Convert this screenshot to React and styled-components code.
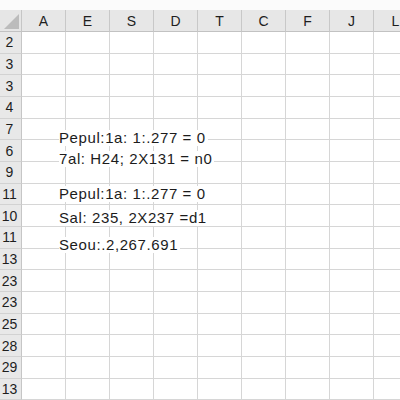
import React from "react";
import styled, { createGlobalStyle } from "styled-components";

const Global = createGlobalStyle`
  html, body { margin: 0; padding: 0; background: #ffffff; }
  body { font-family: "Liberation Sans", Arial, sans-serif; }
`;

const ROW_H = 21.67;
const COLS = ["A", "E", "S", "D", "T", "C", "F", "J", "L"];
const ROWS = [
  { n: "2" }, { n: "3" }, { n: "3" }, { n: "4" },
  { n: "7", text: "Pepul:1a: 1:.277 = 0", shift: 11 },
  { n: "6", text: "7al: H24; 2X131 = n0", shift: 11 },
  { n: "9" },
  { n: "11", text: "Pepul:1a: 1:.277 = 0", shift: 2 },
  { n: "10", text: "Sal: 235, 2X237 =d1", shift: 5 },
  { n: "11", text: "Seou:.2,267.691", shift: 10 },
  { n: "13" }, { n: "23" }, { n: "23" }, { n: "25" }, { n: "28" }, { n: "29" }, { n: "13" },
];

const Page = styled.div`
  width: 400px;
  height: 400px;
  overflow: hidden;
  padding-top: 10px;
  box-sizing: border-box;
  background: #fbfbfb;
`;

const Sheet = styled.div`
  display: grid;
  grid-template-columns: 22px repeat(9, 44px);
  grid-template-rows: 22px;
  grid-auto-rows: ${ROW_H}px;
  background: #ffffff;
`;

const Corner = styled.div`
  position: relative;
  background: #e6e6e6;
  border-right: 1px solid #c6c6c6;
  border-bottom: 1px solid #c2c2c2;
  box-sizing: border-box;
  &::after {
    content: "";
    position: absolute;
    right: 2px;
    bottom: 2px;
    width: 0;
    height: 0;
    border-left: 15px solid transparent;
    border-bottom: 15px solid #bcbcbc;
  }
`;

const ColHeader = styled.div`
  display: flex;
  align-items: center;
  justify-content: center;
  background: #e7e7e7;
  border-right: 1px solid #c8c8c8;
  border-bottom: 1px solid #c2c2c2;
  box-sizing: border-box;
  font-size: 14px;
  color: #1e1e1e;
  padding-top: 1px;
`;

const RowHeader = styled.div`
  display: flex;
  align-items: center;
  justify-content: center;
  background: #e8e8e8;
  border-right: 1px solid #c6c6c6;
  border-bottom: 1px solid #d2d2d2;
  box-sizing: border-box;
  font-size: 14px;
  color: #1e1e1e;
  padding-right: 2px;
`;

const Cell = styled.div`
  position: relative;
  border-right: 1px solid #d6d6d6;
  border-bottom: 1px solid #d6d6d6;
  box-sizing: border-box;
  overflow: visible;
`;

const Entry = styled.span`
  position: absolute;
  left: 37px;
  top: ${(p) => p.$shift}px;
  z-index: 2;
  white-space: nowrap;
  background: #ffffff;
  font-size: 15px;
  line-height: 16px;
  letter-spacing: 0.6px;
  color: #1c1c1c;
  padding-right: 2px;
`;

export default function App() {
  return (
    <>
      <Global />
      <Page>
        <Sheet>
          <Corner />
          {COLS.map((c, i) => (
            <ColHeader key={"h" + i}>{c}</ColHeader>
          ))}
          {ROWS.map((r, ri) => (
            <React.Fragment key={"r" + ri}>
              <RowHeader>{r.n}</RowHeader>
              {COLS.map((c, ci) => (
                <Cell key={ci}>
                  {ci === 0 && r.text ? <Entry $shift={r.shift}>{r.text}</Entry> : null}
                </Cell>
              ))}
            </React.Fragment>
          ))}
        </Sheet>
      </Page>
    </>
  );
}
